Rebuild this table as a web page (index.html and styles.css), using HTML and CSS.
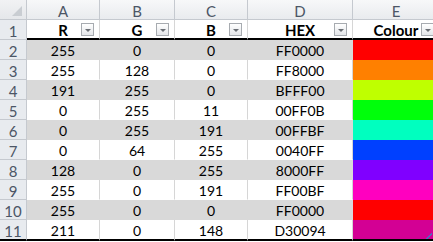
FILE: index.html
```html
<!DOCTYPE html>
<html>
<head>
<meta charset="utf-8">
<link rel="stylesheet" href="styles.css">
</head>
<body>
<table class="sheet">
  <colgroup>
    <col class="c-rh"><col class="c-a"><col class="c-b"><col class="c-c"><col class="c-d"><col class="c-e">
  </colgroup>
  <thead>
    <tr class="colhead">
      <th class="corner"><span class="selall"></span></th>
      <th>A</th><th>B</th><th>C</th><th>D</th><th>E</th>
    </tr>
  </thead>
  <tbody>
    <tr class="hdr">
      <td class="rh">1</td>
      <td><span class="lbl">R</span><span class="dd"></span></td>
      <td><span class="lbl">G</span><span class="dd"></span></td>
      <td><span class="lbl">B</span><span class="dd"></span></td>
      <td><span class="lbl">HEX</span><span class="dd"></span></td>
      <td><span class="lbl">Colour</span><span class="dd"></span></td>
    </tr>
    <tr class="band"><td class="rh">2</td><td>255</td><td>0</td><td>0</td><td>FF0000</td><td class="sw" style="background:#FF0000"></td></tr>
    <tr><td class="rh">3</td><td>255</td><td>128</td><td>0</td><td>FF8000</td><td class="sw" style="background:#FF8000"></td></tr>
    <tr class="band"><td class="rh">4</td><td>191</td><td>255</td><td>0</td><td>BFFF00</td><td class="sw" style="background:#BFFF00"></td></tr>
    <tr><td class="rh">5</td><td>0</td><td>255</td><td>11</td><td>00FF0B</td><td class="sw" style="background:#00FF0B"></td></tr>
    <tr class="band"><td class="rh">6</td><td>0</td><td>255</td><td>191</td><td>00FFBF</td><td class="sw" style="background:#00FFBF"></td></tr>
    <tr><td class="rh">7</td><td>0</td><td>64</td><td>255</td><td>0040FF</td><td class="sw" style="background:#0040FF"></td></tr>
    <tr class="band"><td class="rh">8</td><td>128</td><td>0</td><td>255</td><td>8000FF</td><td class="sw" style="background:#8000FF"></td></tr>
    <tr><td class="rh">9</td><td>255</td><td>0</td><td>191</td><td>FF00BF</td><td class="sw" style="background:#FF00BF"></td></tr>
    <tr class="band"><td class="rh">10</td><td>255</td><td>0</td><td>0</td><td>FF0000</td><td class="sw" style="background:#FF0000"></td></tr>
    <tr class="last"><td class="rh">11</td><td>211</td><td>0</td><td>148</td><td>D30094</td><td class="sw" style="background:#D30094"><span class="grip"></span></td></tr>
  </tbody>
</table>
</body>
</html>
```
FILE: styles.css
```css
html, body {
  margin: 0;
  padding: 0;
  background: #ffffff;
  overflow: hidden;
}

.sheet {
  border-collapse: separate;
  border-spacing: 0;
  table-layout: fixed;
  width: 440px;
  font-family: "Lato", "Liberation Sans", sans-serif;
  font-size: 14px;
  color: #000;
}

.c-rh { width: 27px; }
.c-a { width: 73px; }
.c-b { width: 75px; }
.c-c { width: 73px; }
.c-d { width: 105px; }
.c-e { width: 87px; }

.sheet th,
.sheet td {
  padding: 0;
  text-align: center;
  white-space: nowrap;
  overflow: hidden;
  vertical-align: bottom;
}

.colhead th {
  height: 19px;
  line-height: 16px;
  font-weight: normal;
  color: #4c5666;
  background: linear-gradient(#f7f8f9, #e9ebee);
  border-right: 1px solid #c5c9cf;
  border-bottom: 1px solid #c5c9cf;
  font-size: 15px;
}

.colhead th.corner {
  position: relative;
  background: linear-gradient(#f1f2f4, #e5e7ea);
}

.selall {
  position: absolute;
  right: 4px;
  bottom: 3px;
  width: 0;
  height: 0;
  border-left: 10px solid transparent;
  border-bottom: 10px solid #c9cdd2;
}

.sheet td {
  height: 19px;
  line-height: 16px;
  border-right: 1px solid #d6d6d6;
  border-bottom: 1px solid #ffffff;
  background: #ffffff;
}

.sheet td.rh {
  color: #4c5666;
  font-size: 15px;
  background: #e8ebef;
  border-right: 1px solid #c5c9cf;
  border-bottom: 1px solid #c5c9cf;
}

.band td {
  background: #d9d9d9;
  border-color: #d9d9d9;
}

.band td.rh {
  background: #e8ebef;
  border-color: #c5c9cf;
}

.hdr td {
  height: 18px;
  line-height: 16px;
  border-bottom: 2px solid #000000;
  position: relative;
  font-weight: bold;
  font-size: 15px;
}

.hdr td.rh {
  font-weight: normal;
  border-bottom: 1px solid #c5c9cf;
  height: 19px;
}

.dd {
  position: absolute;
  right: 5px;
  top: 3px;
  width: 11px;
  height: 11px;
  border: 1px solid #a7abb0;
  background: linear-gradient(#ffffff, #e4e6e9);
}

.dd::after {
  content: "";
  position: absolute;
  left: 3px;
  top: 5px;
  width: 0;
  height: 0;
  border-left: 3px solid transparent;
  border-right: 3px solid transparent;
  border-top: 3px solid #6b6f75;
}

.sheet td.sw {
  border-right-color: transparent;
  border-bottom-color: transparent;
  background-clip: padding-box;
}

.last td {
  border-bottom: 2px solid #000000;
}

.last td.rh {
  border-bottom: 2px solid #000000;
}

.last td.sw {
  position: relative;
  border-bottom: 2px solid #000000;
}

.grip {
  position: absolute;
  right: 7px;
  bottom: 0;
  width: 6px;
  height: 6px;
  background: linear-gradient(135deg, transparent 45%, #4a6fc0 45%, #4a6fc0 60%, transparent 60%);
}
```
